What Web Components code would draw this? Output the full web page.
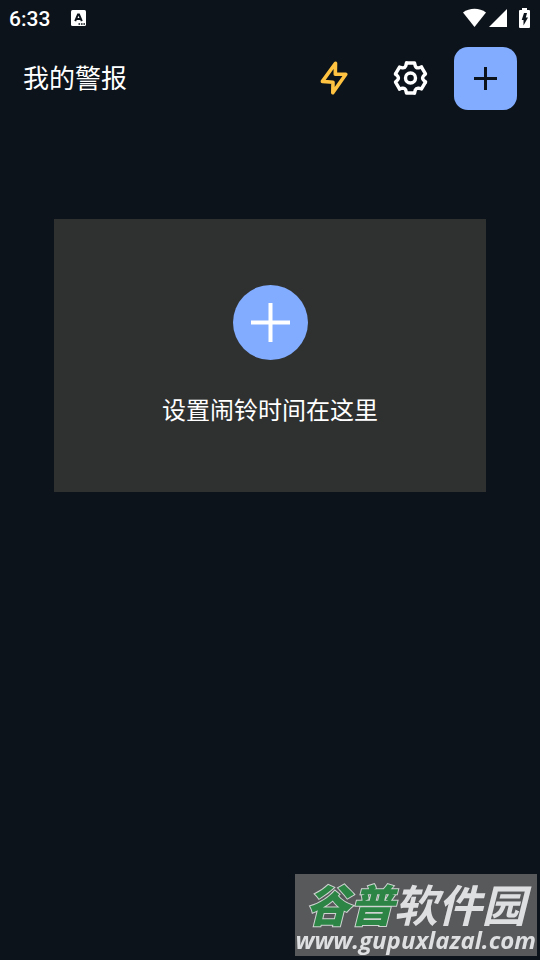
<!DOCTYPE html>
<html lang="zh-CN">
<head>
<meta charset="utf-8">
<meta name="viewport" content="width=device-width, initial-scale=1">
<title>我的警报</title>
<style>
  html { background: #0c131a; }
  body {
    margin: 0;
    color: #fff;
    font-family: Roboto, "Noto Sans CJK SC", sans-serif;
  }
</style>
</head>
<body>
<alarm-app></alarm-app>
<script>
function define(name, html) {
  const template = document.createElement('template');
  template.innerHTML = html;
  customElements.define(name, class extends HTMLElement {
    constructor() {
      super();
      this.attachShadow({ mode: 'open' }).append(template.content.cloneNode(true));
    }
  });
}

define('status-bar', `
  <style>
    :host { display: flex; align-items: center; justify-content: space-between; height: 36px; padding: 0 10px 0 9px; }
    div { display: flex; align-items: center; }
    .left { gap: 21px; }
    time { font-size: 21px; line-height: 24px; font-weight: 500; padding-top: 2px; }
    svg { display: block; }
    .battery { margin-left: 12px; }
    .signal { margin-left: 3px; }
  </style>
  <div class="left">
    <time>6:33</time>
    <svg width="15" height="16" viewBox="0 0 15 16" aria-hidden="true">
      <rect width="15" height="16" rx="1.5" fill="#fff"/>
      <path d="M4.2 11.2 7 4.4h1l2.8 6.8M5.3 9h4.3" fill="none" stroke="#0c131a" stroke-width="2"/>
      <path d="M7.5 13.2h1.6v1.5H7.5zM10 13.2h1.6v1.5H10zM12.4 13.2H14v1.5h-1.6z" fill="#0c131a"/>
    </svg>
  </div>
  <div>
    <svg width="23" height="20" viewBox="0 0 23 20" role="img" aria-label="Wi-Fi"><path d="M0 4.5C6.5-.5 16.5-.5 23 4.5L11.5 19Z" fill="#fff"/></svg>
    <svg class="signal" width="18" height="18" viewBox="0 0 18 18" role="img" aria-label="信号"><path d="M18 0v18H0z" fill="#fff"/></svg>
    <svg class="battery" width="11" height="20" viewBox="0 0 11 20" role="img" aria-label="正在充电"><path d="M3 0h5v2h2q1 0 1 1v16q0 1-1 1H1q-1 0-1-1V3q0-1 1-1h2z" fill="#fff"/><path d="M5 5h3L6.8 9.5H9L4.5 17.5V12H2.7z" fill="#0c131a"/></svg>
  </div>
`);

define('icon-button', `
  <style>
    :host { display: block; flex: none; width: 63px; height: 63px; }
    button { display: block; width: 100%; height: 100%; padding: 0; border: 0; border-radius: 14px; background: var(--button-bg, transparent); cursor: pointer; }
    ::slotted(svg) { display: block; width: 100%; height: 100%; }
  </style>
  <button type="button"><slot></slot></button>
`);

define('app-header', `
  <style>
    :host { display: flex; align-items: center; justify-content: space-between; padding: 11px 23px 0; }
    h1 { margin: 0; font-size: 26px; line-height: 36px; font-weight: 400; }
    nav { display: flex; gap: 12px; }
    .add { --button-bg: #82acff; }
  </style>
  <h1>我的警报</h1>
  <nav>
    <icon-button><svg viewBox="0 0 63 63" role="img" aria-label="快速闹钟">
      <path d="M31.5 16.3 31.3 27.3H41.8L28.8 45.7 29 35.2 18.4 34.4Z" fill="none" stroke="#ffc241" stroke-width="3.6" stroke-linejoin="round"/>
    </svg></icon-button>
    <icon-button><svg viewBox="0 0 63 63" role="img" aria-label="设置">
      <g transform="translate(31.5 31)" fill="none" stroke="#fff" stroke-width="3.4" stroke-linecap="round" stroke-linejoin="round">
        <circle r="5"/>
        <path d="M-4-15H4L4.8-12Q5.7-9.9 8-10.15L11-10.96"/>
        <path transform="rotate(60)" d="M-4-15H4L4.8-12Q5.7-9.9 8-10.15L11-10.96"/>
        <path transform="rotate(120)" d="M-4-15H4L4.8-12Q5.7-9.9 8-10.15L11-10.96"/>
        <path transform="rotate(180)" d="M-4-15H4L4.8-12Q5.7-9.9 8-10.15L11-10.96"/>
        <path transform="rotate(240)" d="M-4-15H4L4.8-12Q5.7-9.9 8-10.15L11-10.96"/>
        <path transform="rotate(300)" d="M-4-15H4L4.8-12Q5.7-9.9 8-10.15L11-10.96"/>
      </g>
    </svg></icon-button>
    <icon-button class="add"><svg viewBox="0 0 63 63" role="img" aria-label="添加闹钟">
      <path d="M31.5 20v23M20 31.5h23" stroke="#0c131a" stroke-width="3"/>
    </svg></icon-button>
  </nav>
`);

define('empty-card', `
  <style>
    :host { display: block; margin: 109px 10% 0; }
    button { display: flex; flex-direction: column; align-items: center; gap: 33px; width: 100%; padding: 66px 16px 63px; border: 0; background: #2f3131; color: #fff; font: inherit; font-size: 24px; line-height: 36px; cursor: pointer; }
    svg { display: block; width: 75px; height: 75px; }
  </style>
  <button type="button">
    <svg viewBox="0 0 75 75" aria-hidden="true"><circle cx="37.5" cy="37.5" r="37.5" fill="#82acff"/><path d="M37.5 18v39M18 37.5h39" stroke="#fff" stroke-width="4"/></svg>
    <span><slot></slot></span>
  </button>
`);

define('site-mark', `
  <style>
    :host { display: block; position: fixed; right: 3px; bottom: 4px; background: #58595b; color: #dedfe1; white-space: nowrap; }
    div { padding: 8px 0 4px; text-align: center; font: italic 700 44px/42px "Noto Sans CJK SC", sans-serif; }
    b { color: #2c8545; -webkit-text-stroke: 2px #cfd3d1; paint-order: stroke fill; }
    a { display: block; padding: 0 1px 4px; color: inherit; text-decoration: none; font: italic 700 24px/24px "Open Sans", sans-serif; }
  </style>
  <div><b>谷普</b>软件园</div>
  <a href="#">www.gupuxlazal.com</a>
`);

define('alarm-app', `
  <style>:host { display: block; min-height: 100vh; }</style>
  <status-bar></status-bar>
  <app-header></app-header>
  <main><empty-card>设置闹铃时间在这里</empty-card></main>
  <site-mark></site-mark>
`);
</script>
</body>
</html>
